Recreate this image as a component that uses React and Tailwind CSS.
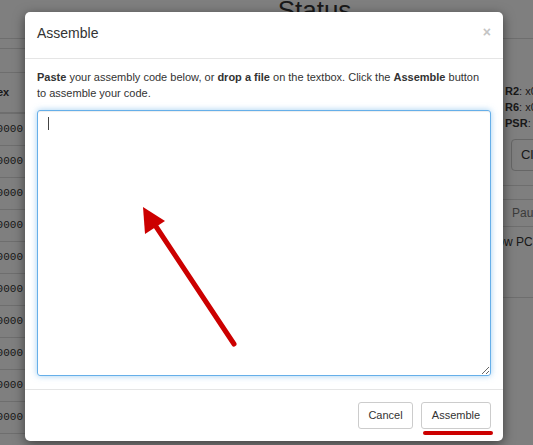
import { useState } from 'react';

const rows = Array.from({ length: 11 });

const App = () => {
  const [code, setCode] = useState('');

  return (
    <div className="relative h-[445px] w-[533px] overflow-hidden bg-white text-[#333] font-['Liberation_Sans',Arial,sans-serif]">
      {/* PAGE BEHIND THE MODAL */}
      <div className="h-[39px] border-b border-[#ddd] flex justify-center">
        <h1 className="-mt-[8px] ml-[96px] text-[26px] leading-[36px]">Status</h1>
      </div>

      <div className="flex">
        {/* memory table */}
        <div className="w-[260px] -ml-[60px]">
          <div className="h-[10px] border-b border-[#ddd]" />
          <div className="h-[24px] border-b border-[#ddd]" />
          <div className="h-[41px] flex items-center border-b-2 border-[#ddd] pl-[49px] text-[11px] font-bold">
            Hex
          </div>
          {rows.map((_, i) => (
            <div
              key={i}
              className="h-[32px] flex items-center border-b border-[#ddd] text-[11px]"
            >
              <span className="w-[83px] text-right font-['Liberation_Mono',monospace]">x0000</span>
              <span className="ml-[75px]">NOP</span>
            </div>
          ))}
        </div>

        {/* registers */}
        <div className="ml-auto w-[36px] whitespace-nowrap text-[11px]">
          <div className="pt-[44px] pl-[8px] leading-[16px]">
            <p><b>R2</b>: x0000</p>
            <p><b>R6</b>: x0000</p>
            <p><b>PSR</b>: x0002</p>
          </div>
          <div className="mt-[8px] ml-[14px] h-[32px] w-[60px] rounded-[4px] border border-[#ccc] flex items-center pl-[9px] text-[13px]">
            Clear
          </div>
          <div className="mt-[14px] border-b border-[#ddd]" />
          <div className="mt-[13px] h-[28px] border-y border-[#ddd] flex items-center pl-[15px] text-[#777] text-[12px]">
            Pause
          </div>
          <div className="-ml-[19px] h-[30px] flex items-center text-[12px]">Follow PC</div>
          <div className="mt-[40px] border-b border-[#ddd]" />
        </div>
      </div>

      {/* BACKDROP */}
      <div className="absolute inset-0 bg-black/50" />

      {/* MODAL */}
      <div className="absolute left-[25px] top-[12px] w-[478px] rounded-[5px] bg-white shadow-[0_3px_12px_rgba(0,0,0,0.5)]">
        {/* HEADER */}
        <div className="h-[47px] border-b border-[#e5e5e5] px-[12px] pt-[13px] flex justify-between">
          <h4 className="text-[14px] leading-[16px]">Assemble</h4>
          <span className="mt-[-1px] text-[14px] leading-[16px] font-bold text-[#c4c4c4]">×</span>
        </div>

        {/* BODY */}
        <div className="px-[12px] pt-[10px] pb-[13px]">
          <p className="text-[11px] leading-[16px]">
            <b>Paste</b> your assembly code below, or <b>drop a file</b> on the textbox. Click the{' '}
            <b>Assemble</b> button to assemble your code.
          </p>
          <div className="relative mt-[9px]">
            <textarea
              value={code}
              onChange={(e) => setCode(e.target.value)}
              className="block h-[266px] w-full rounded-[3px] border border-[#66afe9] px-[10px] py-[6px] text-[11px] outline-none shadow-[inset_0_1px_1px_rgba(0,0,0,0.075),0_0_6px_rgba(102,175,233,0.6)]"
            />
            <span className="absolute left-[11px] top-[7px] h-[13px] w-px bg-[#444]" />
          </div>
        </div>

        {/* FOOTER */}
        <div className="border-t border-[#e5e5e5] p-[12px] flex justify-end gap-[8px]">
          <button className="h-[27px] w-[55px] rounded-[3px] border border-[#ccc] bg-white text-[11px] text-[#333]">
            Cancel
          </button>
          <div className="relative">
            <button className="h-[27px] w-[70px] rounded-[3px] border border-[#ccc] bg-white text-[11px] text-[#333]">
              Assemble
            </button>
            {/* red underline annotation */}
            <span className="absolute left-[2px] top-[29px] h-[4px] w-[70px] rounded-full bg-[#cc0000]" />
          </div>
        </div>
      </div>

      {/* red arrow annotation */}
      <svg className="absolute left-0 top-0 pointer-events-none" width="533" height="445">
        <line x1="234" y1="344" x2="153" y2="222" stroke="#cc0000" strokeWidth="5" strokeLinecap="round" />
        <polygon points="143,207 145,234 165,221" fill="#cc0000" />
      </svg>
    </div>
  );
};

export default App;
